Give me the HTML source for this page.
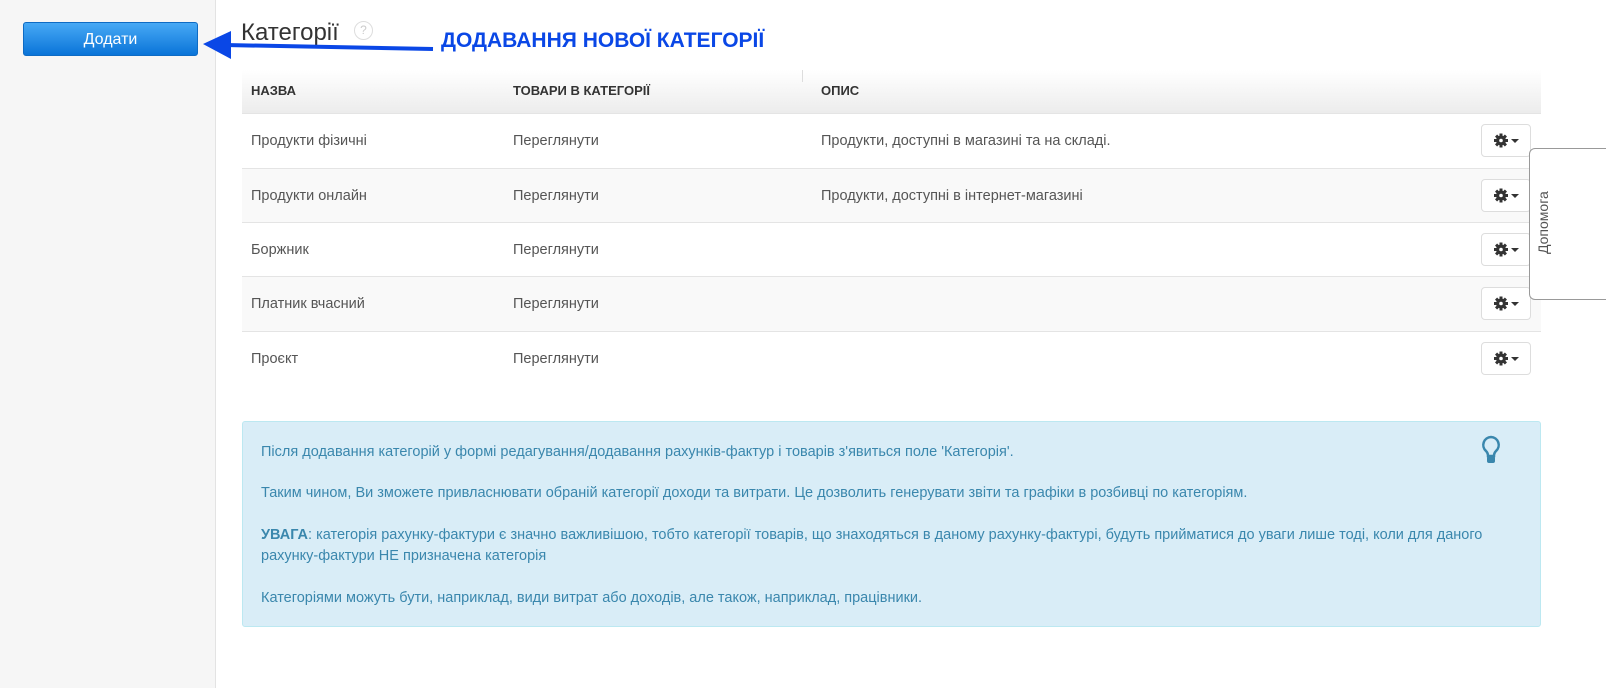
<!DOCTYPE html>
<html><head><meta charset="utf-8"><style>
body{margin:0;width:1606px;height:688px;overflow:hidden;background:#fff;font-family:"Liberation Sans",sans-serif;position:relative}
.side{position:absolute;left:0;top:0;width:215px;height:688px;background:#f6f6f6;border-right:1px solid #e3e3e3}
.btn{position:absolute;left:23px;top:22px;width:175px;height:34px;border-radius:3px;background:linear-gradient(#47a9f5,#0a74d8);border:1px solid #0e6bc4;box-sizing:border-box;color:#fff;font-size:16px;text-align:center;line-height:33px}
h1{position:absolute;left:241px;top:19px;margin:0;font-weight:normal;font-size:24px;color:#333}
.q{position:absolute;left:354px;top:21px;width:17px;height:17px;border:1px solid #ddd;border-radius:50%;color:#ccc;font-size:12px;text-align:center;line-height:17px}
.ann{position:absolute;left:441px;top:29px;color:#0a47e6;font-weight:bold;font-size:21px}
.th{position:absolute;left:242px;top:70px;width:1299px;height:43px;background:linear-gradient(#fff,#ececec)}
.th span{position:absolute;top:13px;font-size:13px;font-weight:bold;color:#333}
.row{position:absolute;left:242px;width:1299px;height:54px;border-top:1px solid #e4e4e4;font-size:14.5px;color:#555}
.row span{position:absolute;top:19px}
.g{position:absolute;left:1239px;top:10px;width:50px;height:33px;border:1px solid #ddd;border-radius:4px;background:#fff;box-sizing:border-box}
.info{position:absolute;left:242px;top:421px;width:1299px;height:206px;box-sizing:border-box;background:#d9edf7;border:1px solid #bce8f1;border-radius:3px;color:#3a87ad;font-size:14.5px;padding:0 18px}
.info p{margin:0;position:absolute;left:18px;right:40px;line-height:21px}
.help{position:absolute;left:1529px;top:148px;width:90px;height:150px;border:1px solid #999;border-radius:6px;background:#fff}
.help span{position:absolute;left:5px;top:75px;font-size:14px;color:#555;white-space:nowrap;transform-origin:0 0;transform:translate(0,30px) rotate(-90deg)}
</style></head><body>
<div class="side"></div>
<div class="btn">Додати</div>
<h1>Категорії</h1><div class="q">?</div>
<svg style="position:absolute;left:200px;top:28px" width="235" height="34"><line x1="25" y1="17" x2="233" y2="21" stroke="#0a47e6" stroke-width="4"/><polygon points="3,16 31,3 31,31" fill="#0a47e6"/></svg>
<div class="ann">ДОДАВАННЯ НОВОЇ КАТЕГОРІЇ</div>
<svg width="0" height="0" style="position:absolute"><defs><g id="gear"><g fill="#333"><circle cx="19" cy="15.5" r="5"/><rect x="17.5" y="8.5" width="3" height="14"/><rect x="12" y="14" width="14" height="3"/><rect x="17.5" y="8.5" width="3" height="14" transform="rotate(45 19 15.5)"/><rect x="17.5" y="8.5" width="3" height="14" transform="rotate(-45 19 15.5)"/></g><circle cx="19" cy="15.5" r="1.8" fill="#fff"/><polygon points="29,14 37,14 33,18" fill="#333"/></g></defs></svg>
<div class="th"><span style="left:9px">НАЗВА</span><span style="left:271px">ТОВАРИ В КАТЕГОРІЇ</span><span style="left:579px">ОПИС</span><div style="position:absolute;left:560px;top:0;width:1px;height:12px;background:#ddd"></div></div>
<div class="row" style="top:113px"><span style="left:9px">Продукти фізичні</span><span style="left:271px">Переглянути</span><span style="left:579px">Продукти, доступні в магазині та на складі.</span><div class="g"><svg width="48" height="31"><use href="#gear"/></svg></div></div>
<div class="row" style="top:168px;background:#f9f9f9"><span style="left:9px">Продукти онлайн</span><span style="left:271px">Переглянути</span><span style="left:579px">Продукти, доступні в інтернет-магазині</span><div class="g"><svg width="48" height="31"><use href="#gear"/></svg></div></div>
<div class="row" style="top:222px"><span style="left:9px">Боржник</span><span style="left:271px">Переглянути</span><div class="g"><svg width="48" height="31"><use href="#gear"/></svg></div></div>
<div class="row" style="top:276px;background:#f9f9f9"><span style="left:9px">Платник вчасний</span><span style="left:271px">Переглянути</span><div class="g"><svg width="48" height="31"><use href="#gear"/></svg></div></div>
<div class="row" style="top:331px"><span style="left:9px">Проєкт</span><span style="left:271px">Переглянути</span><div class="g"><svg width="48" height="31"><use href="#gear"/></svg></div></div>
<div class="info">
<p style="top:20px">Після додавання категорій у формі редагування/додавання рахунків-фактур і товарів з'явиться поле 'Категорія'.</p>
<p style="top:61px">Таким чином, Ви зможете привласнювати обраній категорії доходи та витрати. Це дозволить генерувати звіти та графіки в розбивці по категоріям.</p>
<p style="top:103px"><b>УВАГА</b>: категорія рахунку-фактури є значно важливішою, тобто категорії товарів, що знаходяться в даному рахунку-фактурі, будуть прийматися до уваги лише тоді, коли для даного рахунку-фактури НЕ призначена категорія</p>
<p style="top:166px">Категоріями можуть бути, наприклад, види витрат або доходів, але також, наприклад, працівники.</p>
<svg style="position:absolute;left:1237px;top:12px" width="22" height="32"><path d="M11 3a8 8 0 0 0-5 14c1.5 1.5 2 3 2 5h6c0-2 .5-3.5 2-5a8 8 0 0 0-5-14z" fill="none" stroke="#3a87ad" stroke-width="2.5"/><rect x="7" y="22" width="8" height="7" rx="2" fill="#3a87ad"/></svg>
</div>
<div class="help"><span>Допомога</span></div>
</body></html>
